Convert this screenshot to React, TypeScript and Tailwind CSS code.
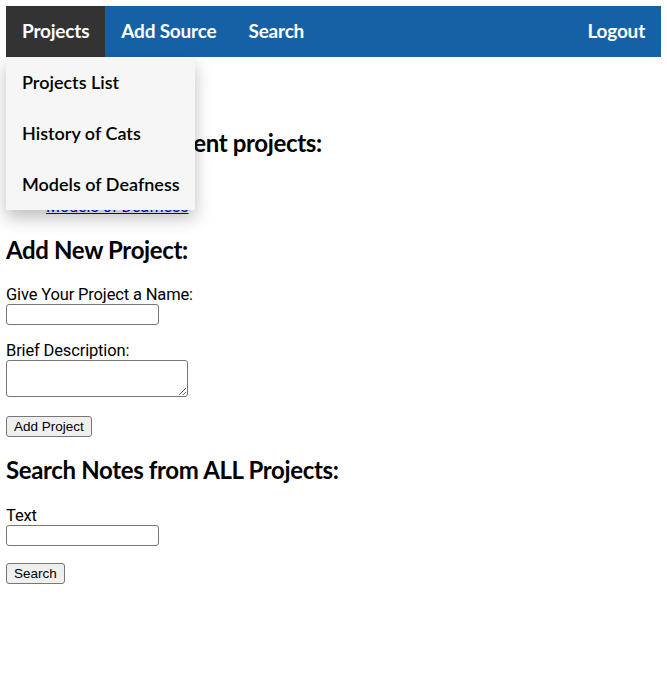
import React from 'react';

const heading = "font-['Lato',sans-serif] font-bold text-[24px] leading-[30px] tracking-[-0.35px] text-black";
const label = "block font-['Roboto',sans-serif] text-[16.5px] leading-[19px] tracking-[-0.15px] text-black";
const btn =
  "font-['Liberation_Sans',Arial,sans-serif] text-[13.5px] leading-[15px] h-[21px] px-[7px] bg-[#efefef] border border-[#767676] rounded-[3px] text-black";

const NavBar: React.FC = () => {
  const dropdown = ['Projects List', 'History of Cats', 'Models of Deafness'];
  return (
    <nav className="relative flex items-stretch h-[51px] bg-[#1661a6] font-['Lato',sans-serif] font-bold text-[19px] tracking-[-0.2px] text-white">
      <div className="relative">
        <a className="flex items-center h-full px-4 bg-[#333333]">Projects</a>
        <div className="absolute left-0 top-full z-10 w-[189px] bg-[#f6f6f6] shadow-[0_8px_16px_rgba(0,0,0,0.25)] font-semibold text-[18px] tracking-normal text-black">
          {dropdown.map((d) => (
            <a key={d} className="block px-4 py-[14px] leading-[23px] whitespace-nowrap">
              {d}
            </a>
          ))}
        </div>
      </div>
      <a className="flex items-center px-4">Add Source</a>
      <a className="flex items-center px-4">Search</a>
      <a className="flex items-center px-4 ml-auto">Logout</a>
    </nav>
  );
};

export default function App() {
  return (
    <div className="p-[6px] bg-white min-h-[679px]">
      <NavBar />

      <h2 className={`${heading} mt-[71px]`}>Here are your current projects:</h2>
      <ul className="mt-[16px] pl-[40px] font-['Roboto',sans-serif] text-[16px] leading-[22px]">
        <li>
          <a className="text-[#0000ee] underline">History of Cats</a>
        </li>
        <li>
          <a className="text-[#0000ee] underline">Models of Deafness</a>
        </li>
      </ul>

      <h2 className={`${heading} mt-[17px]`}>Add New Project:</h2>
      <form className="flex flex-col items-start">
        <label className={`${label} mt-[20px]`}>Give Your Project a Name:</label>
        <input type="text" className="w-[153px] h-[21px] border border-[#767676] rounded-[3px] bg-white" />
        <label className={`${label} mt-[16px]`}>Brief Description:</label>
        <textarea className="w-[182px] h-[37px] border border-[#767676] rounded-[3px] bg-white" />
        <button type="button" className={`${btn} mt-[19px]`}>
          Add Project
        </button>
      </form>

      <h2 className={`${heading} mt-[18px]`}>Search Notes from ALL Projects:</h2>
      <form className="flex flex-col items-start">
        <label className={`${label} mt-[21px]`}>Text</label>
        <input type="text" className="w-[153px] h-[21px] border border-[#767676] rounded-[3px] bg-white" />
        <button type="button" className={`${btn} mt-[17px]`}>
          Search
        </button>
      </form>
    </div>
  );
}
